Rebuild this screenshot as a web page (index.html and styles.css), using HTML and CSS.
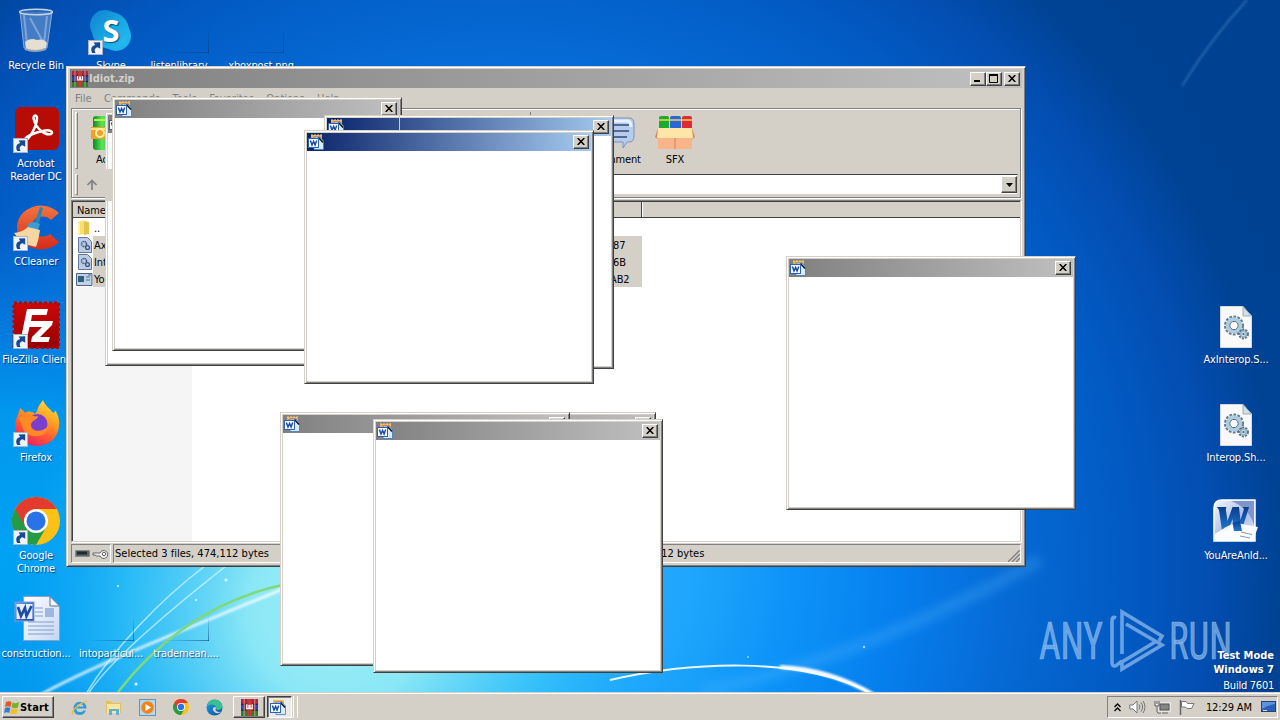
FILE: index.html
```html
<!DOCTYPE html>
<html lang="en">
<head>
<meta charset="utf-8">
<title>Desktop</title>
<link rel="stylesheet" href="styles.css">
</head>
<body>
<svg class="defs" width="0" height="0">
  <defs>
    <linearGradient id="pg" x1="0" y1="0" x2="1" y2="1"><stop offset="0" stop-color="#fff"/><stop offset="1" stop-color="#c4d6f3"/></linearGradient>
    <linearGradient id="wd" x1="0" y1="0" x2="1" y2="1"><stop offset="0" stop-color="#f4f8ff"/><stop offset=".55" stop-color="#a9bbe4"/><stop offset="1" stop-color="#e8effa"/></linearGradient>
    <linearGradient id="wl" x1="0" y1="0" x2="0" y2="1"><stop offset="0" stop-color="#0b3c8c"/><stop offset="1" stop-color="#1f7ad2"/></linearGradient>
    <linearGradient id="wb" x1="0" y1="0" x2="1" y2="1"><stop offset="0" stop-color="#6f9be6"/><stop offset="1" stop-color="#1b3f96"/></linearGradient>
    <linearGradient id="ff" x1="0.8" y1="0" x2="0.3" y2="1"><stop offset="0" stop-color="#ffe23c"/><stop offset=".4" stop-color="#ff9a1f"/><stop offset=".75" stop-color="#ff4a3c"/><stop offset="1" stop-color="#e0206c"/></linearGradient>
    <linearGradient id="fz" x1="0" y1="0" x2="0" y2="1"><stop offset="0" stop-color="#cf0808"/><stop offset="1" stop-color="#960000"/></linearGradient>
    <linearGradient id="cc" x1="0" y1="0" x2="0" y2="1"><stop offset="0" stop-color="#f2743f"/><stop offset="1" stop-color="#d52a1a"/></linearGradient>
    <linearGradient id="sk" x1="0" y1="0" x2="1" y2="1"><stop offset="0" stop-color="#1683cf"/><stop offset=".5" stop-color="#16a7e4"/><stop offset="1" stop-color="#2bc0f2"/></linearGradient>
    <linearGradient id="ed" x1="0" y1="0" x2="1" y2="1"><stop offset="0" stop-color="#1ba0e8"/><stop offset="1" stop-color="#0c4d9c"/></linearGradient>
    <linearGradient id="gn" x1="0" y1="0" x2="1" y2="0"><stop offset="0" stop-color="#0c8a20"/><stop offset=".35" stop-color="#5ae65a"/><stop offset="1" stop-color="#078a1e"/></linearGradient>
    <symbol id="shortcut" viewBox="0 0 15 15"><rect x=".5" y=".5" width="14" height="14" fill="#f0f4fa" stroke="#a8b4c4"/><path d="M4.2 13C2.2 9 3.5 6 7.2 5.1L5.6 2.4 12.2 2.2V8.8L9.6 7.2C6.8 8 6 10 7.6 13Z" fill="#174a92"/></symbol>
    <symbol id="docapp" viewBox="0 0 16 16"><path d="M3 1h11v4H3z" fill="#f3a64a"/><path d="M3 1h11" stroke="#fbd58a" stroke-dasharray="2 1"/><path d="M6 3h6l3.500 4v8.500H6z" fill="#dcebfb" stroke="#3d78ba" stroke-width=".8"/><path d="M10.500 3.500 15 8.500" stroke="#111" stroke-width="1.400"/><rect x=".5" y="4.500" width="10" height="9" fill="#fff" stroke="#2d62b0"/><path d="M2.400 6.500 4 11 5.600 7.400 7.100 11 8.700 6.500" fill="none" stroke="#174ca6" stroke-width="1.500"/></symbol>
    <symbol id="rar" viewBox="0 0 16 16"><rect width="16" height="5" fill="#a5264a"/><rect y="5" width="16" height="5.500" fill="#2844b4"/><rect y="10.500" width="16" height="5.500" fill="#1f8535"/><path d="M0 5h16M0 10.500h16" stroke="#131c3c"/><path d="M3 0v16M13 0v16" stroke="#e88a70" stroke-width="1"/><rect x="6" y="0" width="4" height="16" fill="#c83a2e"/><rect x="4.500" y="5" width="7" height="6" fill="#b3322a"/><path d="M5.500 5v4h2V5.500M8.500 5.500V9h2V5" fill="none" stroke="#fff" stroke-width="1.200"/></symbol>
    <symbol id="dll" viewBox="0 0 32 42"><path d="M.5.500H23L31.500 10V41.500H.5Z" fill="#f9f9f9" stroke="#d4d8dc"/><path d="M23 .5V10h8.500Z" fill="#d3dfe6" stroke="#8ea0ac" stroke-width=".8"/><circle cx="14" cy="19.500" r="7.800" fill="none" stroke="#61798c" stroke-width="4.400" stroke-dasharray="2.400 1.200"/><circle cx="14" cy="19.500" r="6.500" fill="none" stroke="#aacde3" stroke-width="3.600"/><circle cx="14" cy="19.500" r="4.200" fill="none" stroke="#4c5f6e" stroke-width="1"/><circle cx="23.500" cy="28" r="3.900" fill="none" stroke="#586d7e" stroke-width="3" stroke-dasharray="1.800 1"/><circle cx="23.500" cy="28" r="2.900" fill="#d7eaf4" stroke="#8fb3c9" stroke-width="1.600"/><circle cx="23.500" cy="28" r="1.100" fill="#465664"/></symbol>
    <symbol id="chrome" viewBox="0 0 48 48"><circle cx="24" cy="24" r="24" fill="#fbc116"/><path d="M24 24 3.200 12A24 24 0 0 0 24 48L34.400 30Z" fill="#269b46"/><path d="M3.200 12 13.600 30 24 24V12H44.800A24 24 0 0 0 3.200 12Z" fill="#e33b2e"/><circle cx="24" cy="24" r="12" fill="#fff"/><circle cx="24" cy="24" r="9.500" fill="#2a72e8"/></symbol>
    <symbol id="xbtn" viewBox="0 0 8 7"><path d="M.7 0 7.300 7M7.300 0 .7 7" stroke="#000" stroke-width="1.500"/></symbol>
    <symbol id="smalldll" viewBox="0 0 14 16"><path d="M.5.500h9l4 4v11H.5z" fill="#bccbe6" stroke="#62779c"/><circle cx="6" cy="7" r="2.500" fill="none" stroke="#3c5276" stroke-width="1.500" stroke-dasharray="1.300 .7"/><circle cx="9.500" cy="10.500" r="1.900" fill="none" stroke="#3c5276" stroke-width="1.300"/></symbol>
  </defs>
</svg>

<div class="desktop">
  <svg class="wallpaper" width="1280" height="720" viewBox="0 0 1280 720">
    <defs>
      <radialGradient id="w0" gradientUnits="userSpaceOnUse" cx="500" cy="560" r="830"><stop offset="0" stop-color="#35baff"/><stop offset=".24" stop-color="#1da5fc"/><stop offset=".36" stop-color="#0c92f8"/><stop offset=".48" stop-color="#067fee"/><stop offset=".62" stop-color="#0669d4"/><stop offset=".75" stop-color="#025bc4"/><stop offset=".86" stop-color="#034db0"/><stop offset=".94" stop-color="#004394"/><stop offset="1" stop-color="#004292"/></radialGradient>
      <radialGradient id="w1" gradientUnits="userSpaceOnUse" cx="340" cy="610" r="330"><stop offset="0" stop-color="#a4eff6"/><stop offset=".28" stop-color="#8ae7f6"/><stop offset=".65" stop-color="#36c5f8" stop-opacity=".75"/><stop offset="1" stop-color="#12a8fb" stop-opacity="0"/></radialGradient>
      <radialGradient id="w2" gradientUnits="userSpaceOnUse" cx="0" cy="560" r="330"><stop offset="0" stop-color="#00a2f4"/><stop offset=".45" stop-color="#009ff2" stop-opacity=".85"/><stop offset="1" stop-color="#0084e8" stop-opacity="0"/></radialGradient>
      <filter id="b1"><feGaussianBlur stdDeviation="1.200"/></filter>
      <filter id="b2" x="-20%" y="-50%" width="140%" height="200%"><feGaussianBlur stdDeviation="5"/></filter>
    </defs>
    <rect width="1280" height="720" fill="url(#w0)"/>
    <rect width="1280" height="720" fill="url(#w2)"/>
    <rect width="1280" height="720" fill="url(#w1)"/>
    <g fill="none">
      <path d="M700 692Q860 660 1040 560" stroke="#5ac0ff" stroke-opacity=".25" stroke-width="12" filter="url(#b2)"/>
      <path d="M1247 0Q1210 40 1182 86" stroke="#6fa8e0" stroke-opacity=".35" stroke-width="2" filter="url(#b1)"/>
      <path d="M40 695C100 662 190 628 290 586" stroke="#fff" stroke-opacity=".75" stroke-width="3" filter="url(#b1)"/>
      <path d="M88 694C110 660 170 610 226 566M86 694C112 650 160 600 205 566" stroke="#e8fdff" stroke-opacity=".65" stroke-width="1.500"/>
      <path d="M118 692C160 638 215 600 282 585" stroke="#7fd97a" stroke-width="2.500"/>
      <path d="M610 680C690 662 800 655 872 694" stroke="#fff" stroke-opacity=".9" stroke-width="2"/>
      <path d="M780 667Q830 669 874 695" stroke="#fff" stroke-width="4" filter="url(#b1)"/>
    </g>
    <g fill="#e2fbff"><circle cx="226" cy="580" r="1.500"/><circle cx="136" cy="684" r="1.500"/><circle cx="118" cy="586" r="1"/><circle cx="196" cy="600" r="1"/><circle cx="748" cy="657" r="1" opacity=".6"/><circle cx="864" cy="647" r="1.200" opacity=".7"/></g>
    <g class="brand" fill="none" stroke="#a9cff5" stroke-opacity=".62">
      <text x="1039" y="659" font-size="52" textLength="64" lengthAdjust="spacingAndGlyphs">ANY</text>
      <text x="1169" y="659" font-size="52" textLength="63" lengthAdjust="spacingAndGlyphs">RUN</text>
      <path d="M1116 618C1112 616 1112 619 1112 622V662C1112 667 1115 667 1118 664L1122 661M1122 654V612L1162 636 1159 641M1126 624 1162 645 1122 669V662L1155 642" stroke-width="3.600"/>
    </g>
  </svg>

  <div class="item i1"><svg width="38" height="46" viewBox="0 0 38 46"><path d="M3 4 7 40Q18 46 30 40L35 4Z" fill="#7aa2d6" fill-opacity=".55"/><path d="M7 7 10 36M30 8 27 35M13 10 25 32" stroke="#e7f3ff" stroke-width="2" opacity=".35"/><path d="M8 34Q13 29 20 32 27 30 30 35L29 40Q18 45 9 41Z" fill="#e5ded2"/><path d="M3 4 7 40Q18 46 30 40L35 4" fill="none" stroke="#a5bbd8" stroke-opacity=".8"/><path d="M8 41Q18 45 29 41" stroke="#98a4b0" stroke-width="2" fill="none"/><ellipse cx="19" cy="4" rx="16.500" ry="2.800" fill="#4178bd" fill-opacity=".6" stroke="#c6d4e4" stroke-width="1.400"/></svg><span>Recycle Bin</span></div>
  <div class="item i2"><svg width="48" height="48" viewBox="0 0 48 48"><circle cx="18" cy="18" r="15" fill="#118fd6"/><circle cx="29" cy="29" r="15" fill="#20b4ee"/><circle cx="23.500" cy="23.500" r="18.500" fill="url(#sk)"/><text x="24" y="35" class="skype-s">S</text></svg><svg class="arrow" width="15" height="15"><use href="#shortcut"/></svg><span>Skype</span></div>
  <div class="item i3"><i class="ghost"></i><span>listenlibrary</span></div>
  <div class="item i4"><i class="ghost"></i><span>xboxpost.png</span></div>
  <div class="item i5"><svg width="48" height="48" viewBox="0 0 48 48"><rect x="3" y="2" width="44" height="43" rx="6" fill="#b70c03"/><path d="M13 36C19 32 25 20 25 13 25 9 20 10 22 15 24 23 33 31 39 29 42 27 38 24 31 26 24 27 15 31 13 34" fill="none" stroke="#fff" stroke-width="2.500"/></svg><svg class="arrow" width="15" height="15"><use href="#shortcut"/></svg><span>Acrobat<br>Reader DC</span></div>
  <div class="item i6"><svg width="48" height="48" viewBox="0 0 48 48"><path d="M47 10A24 22 0 1 0 47 39L38 31A11 10 0 1 1 39 17Z" fill="url(#cc)"/><path d="M28 4 31 5 27 20 23 19Z" fill="#2b86b8"/><path d="M16 21Q22 17 28 21L26 27 15 25Z" fill="#3d9cd0"/><path d="M16 24 28 27Q27 36 24 44 10 42 2 30 11 29 16 24Z" fill="#f6d7a4"/></svg><svg class="arrow" width="15" height="15"><use href="#shortcut"/></svg><span>CCleaner</span></div>
  <div class="item i7"><svg width="48" height="48" viewBox="0 0 48 48"><rect x="2" y="2" width="45" height="45" fill="url(#fz)" stroke="#b40808" stroke-width="3" stroke-dasharray="3 2"/><path d="M15 8H36L34.500 14H20L19 20H41L40 24 28 36H38L36.500 41H19L20 36 30 26H17.500L15 37H9Z" fill="#fff"/></svg><svg class="arrow" width="15" height="15"><use href="#shortcut"/></svg><span>FileZilla Client</span></div>
  <div class="item i8"><svg width="48" height="48" viewBox="0 0 48 48"><path d="M3 27C3 20 7 15 8 9 10 10 12 12 13 14 16 12 20 12 23 15L25 12C26 7 29 4 31 1 33 7 38 9 41 14 43 13 43 12 43 11 48 18 48 26 46 32 43 42 34 47 24 47 12 46 3 38 3 27Z" fill="url(#ff)"/><circle cx="25.500" cy="25" r="10" fill="#7a3fd0"/><path d="M7 19C15 14 21 18 26 17 26 21 19 21 19 26 19 33 31 34 36 27 36 38 20 41 12 32Z" fill="#ff8a25"/></svg><svg class="arrow" width="15" height="15"><use href="#shortcut"/></svg><span>Firefox</span></div>
  <div class="item i9"><svg width="48" height="48"><use href="#chrome"/></svg><svg class="arrow" width="15" height="15"><use href="#shortcut"/></svg><span>Google<br>Chrome</span></div>
  <div class="item i10"><svg width="48" height="48" viewBox="0 0 48 48"><path d="M11.500 1.500H38L47.500 11V45.500H11.500Z" fill="url(#pg)" stroke="#8b9fc8"/><path d="M38 1.500V11H47.500Z" fill="#f2f6fd" stroke="#5c6f9b"/><path d="M23 13H31M23 17H31M23 21H31M16 27H42M16 31H42M16 35H42M16 39H42" stroke="#7f9dcd"/><rect x="33" y="13" width="9" height="9" fill="#9fb7dd"/><rect x="3" y="7" width="19" height="19" fill="url(#wb)" stroke="#7d9fdc"/><rect x="4.500" y="9" width="16" height="15" fill="#e7effb"/><path d="M6 12 9 21 13 13 14.500 21 19.500 11" fill="none" stroke="#1f4ca4" stroke-width="2.700"/></svg><span>construction...</span></div>
  <div class="item i11"><i class="ghost"></i><span>intoparticul...</span></div>
  <div class="item i12"><i class="ghost"></i><span>trademean....</span></div>
  <div class="item i13"><svg width="32" height="42"><use href="#dll"/></svg><span>AxInterop.S...</span></div>
  <div class="item i14"><svg width="32" height="42"><use href="#dll"/></svg><span>Interop.Sh...</span></div>
  <div class="item i15"><svg width="46" height="44" viewBox="0 0 46 44"><path d="M9 1H42V42H1V9Q1 1 9 1Z" fill="url(#wd)" stroke="#fff" stroke-width="1.500"/><path d="M18 2H41V26Q36 9 18 2Z" fill="#7e95cc"/><path d="M3 8H13L15 23 20 8H27L29 23 32 8H40" fill="none"/><path d="M4 8H13.500L12.800 10 14.500 22 19.500 8H26L27.500 21 31 10 29.500 8H36L28.500 32H21L19.500 20 15 32H9L6 11Z" fill="url(#wl)"/><path d="M2 35Q18 24 24 24L45 28 40 42H2Z" fill="#fff" fill-opacity=".95"/><path d="M27 22 29 32H21L19.500 24Z" fill="url(#wl)"/><path d="M28 33 39 35.500M27 37 37 39" stroke="#8795ad"/></svg><span>YouAreAnId...</span></div>

  <section class="archiver">
    <header class="caption gray"><svg width="16" height="16"><use href="#rar"/></svg><b>Idiot.zip</b><span class="fill"></span><i class="btn"><svg width="8" height="7"><path d="M0 5h6v2H0z"/></svg></i><i class="btn max"><svg width="9" height="9"><path d="M.5 1h8v7.500h-8z" fill="none" stroke="#000"/><path d="M0 0h9v2H0z"/></svg></i><i class="btn"><svg width="8" height="7"><use href="#xbtn"/></svg></i></header>
    <nav class="menu"><span>File</span><span>Commands</span><span>Tools</span><span>Favorites</span><span>Options</span><span>Help</span></nav>
    <div class="rebar">
      <div class="tools">
        <i class="grip"></i>
        <div class="tool first"><svg width="34" height="36" viewBox="0 0 34 36"><rect x="4" y="1" width="26" height="34" rx="3" fill="url(#gn)"/><path d="M5 5H29" stroke="#b9f04a" stroke-width="2"/><path d="M2 12H32V24H2Z" fill="#f0a02a"/><path d="M2 14h30" stroke="#ffdf7a" stroke-width="2"/><circle cx="11" cy="18" r="4" fill="none" stroke="#fff2a4" stroke-width="2"/></svg><span>Add</span></div>
        <span class="fill"></span><i class="sep"></i><span class="gap"></span>
        <div class="tool"><svg width="38" height="36" viewBox="0 0 38 36"><path d="M4 3H31Q36 3 36 9V21Q36 27 31 27H29L25 33V27H4Z" fill="#b7cbed" stroke="#7893bb"/><path d="M6 6H30Q33 7 33 12" stroke="#e8f3ff" stroke-width="3" fill="none"/><path d="M7 10H31M7 16H31M7 22H29" stroke="#324b72" stroke-width="1.500"/></svg><span>Comment</span></div>
        <div class="tool"><svg width="40" height="36" viewBox="0 0 40 36"><rect x="4" y="1" width="10" height="14" rx="2" fill="#1eaa2f"/><rect x="15" y="1" width="11" height="14" rx="2" fill="#2b67da"/><rect x="27" y="1" width="10" height="14" rx="2" fill="#de2b35"/><path d="M4 5H37" stroke="#edd64a" stroke-width="1.500"/><path d="M3 13 0 22 3 24V34H37V24L40 22 37 13Z" fill="#d98560"/><path d="M3 13H37L38 23H2Z" fill="#fde6a8"/><path d="M3 23H37V34H3Z" fill="#f9b489"/><path d="M20 23V34" stroke="#d88351"/></svg><span>SFX</span></div>
      </div>
      <div class="address"><i class="grip"></i><svg width="12" height="12" viewBox="0 0 12 12"><path d="M6 11V1.500M1.500 6 6 1.500 10.500 6" fill="none" stroke="#808080" stroke-width="1.700"/></svg><div class="field"><i class="drop"><svg width="7" height="4"><path d="M0 0H7L3.500 4Z"/></svg></i></div></div>
    </div>
    <div class="list">
      <div class="thead"><span class="c-name">Name</span><span class="c-crc"></span><span></span></div>
      <div class="row"><svg width="17" height="16" viewBox="0 0 17 16"><path d="M2 2 8 0V14L2 15Z" fill="#f7df71"/><path d="M8 1 13 2V14L8 15Z" fill="#e4c34a"/><path d="M3 3V14" stroke="#fff5ad" stroke-width="2"/></svg><span class="nm">..</span></div>
      <div class="row sel"><svg width="17" height="16"><use href="#smalldll" width="14" height="16" x="2"/></svg><span class="nm">AxInterop.S...</span><span class="crc">87</span></div>
      <div class="row sel"><svg width="17" height="16"><use href="#smalldll" width="14" height="16" x="2"/></svg><span class="nm">Interop.Sh...</span><span class="crc">6B</span></div>
      <div class="row sel"><svg width="17" height="16" viewBox="0 0 17 16"><path d="M.5 2.500h15.500v12H.5z" fill="#bdd2e8" stroke="#51647d"/><path d="M2 5h6v6H2z" fill="#315f78"/><path d="M10 6h4M10 9h4M12 4h3" stroke="#50718f"/></svg><span class="nm">YouAreAnId...</span><span class="crc wide">AB2</span></div>
      <div class="colshade"></div>
    </div>
    <footer class="status"><div class="cell icons"><svg width="15" height="8"><path d="M.5.500h14v6H.5z" fill="#5c6466" stroke="#858b8c"/><path d="M2 3h10" stroke="#23292b" stroke-width="3"/></svg><svg width="17" height="10" viewBox="0 0 17 10"><path d="M1 4H8A4 4 0 1 1 8 7H4L3 6H1Z" fill="#eee" stroke="#686868"/><circle cx="12" cy="5" r="1.700" fill="#fff" stroke="#686868"/></svg></div><div class="cell">Selected 3 files, 474,112 bytes</div><div class="cell total"><span>Total 3 files, 474,112 bytes</span><svg width="12" height="12"><path d="M0 12 12 0M4 12 12 4M8 12 12 8" stroke="#808080" stroke-width="1.400"/></svg></div></footer>
  </section>

  <section class="popup p-b"><header class="caption gray"><svg width="16" height="16"><use href="#docapp"/></svg></header></section>
  <i class="unpainted"></i>
  <section class="popup p-a"><header class="caption gray"><svg width="16" height="16"><use href="#docapp"/></svg><span class="fill"></span><i class="btn"><svg width="8" height="7"><use href="#xbtn"/></svg></i></header></section>
  <section class="popup p-c"><header class="caption navy"><svg width="16" height="16"><use href="#docapp"/></svg><span class="fill"></span><i class="btn"><svg width="8" height="7"><use href="#xbtn"/></svg></i></header></section>
  <i class="trail"></i>
  <section class="popup p-d"><header class="caption navy"><svg width="16" height="16"><use href="#docapp"/></svg><span class="fill"></span><i class="btn"><svg width="8" height="7"><use href="#xbtn"/></svg></i></header></section>
  <section class="popup p-f"><header class="caption gray"><span class="fill"></span><i class="btn"></i></header></section>
  <section class="popup p-e"><header class="caption gray"><svg width="16" height="16"><use href="#docapp"/></svg><span class="fill"></span><i class="btn"></i></header></section>
  <section class="popup p-g"><header class="caption gray"><svg width="16" height="16"><use href="#docapp"/></svg><span class="fill"></span><i class="btn"><svg width="8" height="7"><use href="#xbtn"/></svg></i></header></section>
  <section class="popup p-h"><header class="caption gray"><svg width="16" height="16"><use href="#docapp"/></svg><span class="fill"></span><i class="btn"><svg width="8" height="7"><use href="#xbtn"/></svg></i></header></section>

  <div class="build"><b>Test Mode</b><b>Windows 7</b><span>Build 7601</span></div>
</div>

<div class="taskbar">
  <div class="start"><svg width="16" height="15" viewBox="0 0 16 15"><path d="M2 2Q5 .5 7.500 2L6.500 7Q4 5.500 1 7Z" fill="#e8542a"/><path d="M8.500 2.500Q12 4 15 2L14 7.500Q11 9 7.500 7.500Z" fill="#72b52c"/><path d="M1 8Q4 6.500 6.300 8L5.300 13Q3 11.500 0 13Z" fill="#2f7fd8"/><path d="M7.300 8.500Q10.500 10 13.700 8.500L12.500 13.500Q9.500 15 6.200 13.500Z" fill="#f5bd22"/></svg><b>Start</b></div>
  <div class="quick">
    <svg width="17" height="17" viewBox="0 0 17 17"><path d="M15.500 9.500H5.300Q5.500 13 9 13 11.500 13 12.500 11.500H15Q13 16 8.700 16 2.500 15.500 2.500 9.500 3 3 8.800 2.800 15.500 3 15.500 9.500ZM5.400 7.500H12.500Q12 5 8.900 5 6 5 5.400 7.500Z" fill="#2f9bdc"/><path d="M2 15.500Q-1 13 8 6 15 1 16 3" fill="none" stroke="#ecc13a" stroke-width="1.300"/></svg>
    <svg width="17" height="17" viewBox="0 0 17 17"><path d="M1 2H6L7 4H16V14H1Z" fill="#e6bf58"/><path d="M2 5H15V14H2Z" fill="#f8e7a0"/><path d="M4 16V10H14V16H11V12H7V16Z" fill="#62aede"/></svg>
    <svg width="17" height="17" viewBox="0 0 17 17"><rect x=".5" y=".5" width="16" height="16" fill="#b3d7ed" stroke="#6494b8"/><circle cx="8.500" cy="8.500" r="6.200" fill="#f18416"/><path d="M6.500 5 12 8.500 6.500 12Z" fill="#fff"/></svg>
    <svg width="16" height="16"><use href="#chrome"/></svg>
    <svg width="17" height="17" viewBox="0 0 17 17"><circle cx="8.500" cy="8.500" r="8" fill="url(#ed)"/><path d="M1 7Q3 1 9 .8 15 1 16.500 7 16.500 10.500 12.500 11 10 11 10.300 9 10 6 6 5.500 3 5.500 1 7Z" fill="#38bf92"/><path d="M10.300 9Q9 7 7 9 6 12 10 14 13 15 15.500 12 14 13.500 11 12.500 8.500 11 10.300 9Z" fill="#d4d0c8"/></svg>
  </div>
  <div class="task"><svg width="17" height="17"><use href="#rar"/></svg></div>
  <div class="task down"><svg width="16" height="16"><use href="#docapp"/></svg></div>
  <i class="edge"></i><i class="edge last"></i>
  <span class="fill"></span>
  <div class="tray"><svg width="7" height="9" viewBox="0 0 7 9"><path d="M.5 4 3.500 1 6.500 4M.5 8 3.500 5 6.500 8" fill="none" stroke="#000" stroke-width="1.300"/></svg><svg width="17" height="14" viewBox="0 0 17 14"><path d="M.8 5H4L8 1V13L4 9H.8Z" fill="#fff" stroke="#777"/><path d="M10 4.500Q12 7 10 9.500M12 2.500Q15.200 7 12 11.500M14 1Q18 7 14 13" fill="none" stroke="#777"/></svg><svg width="17" height="15" viewBox="0 0 17 15"><rect x="5" y="3" width="11" height="8" fill="#b8b8b8" stroke="#fff"/><rect x="6" y="4" width="9" height="6" fill="#858585" stroke="#555"/><path d="M8 13h6M3 7v5q0 2 4 1" stroke="#666" fill="none"/><path d="M1 1V6H5V1M3 1V4" stroke="#555" fill="#eee"/></svg><svg width="16" height="15" viewBox="0 0 16 15"><path d="M1.500 0V15" stroke="#666" stroke-width="1.500"/><path d="M2.500 1.500H7L8.500 3.500H15L12.500 8.500H8L6.500 7H2.500Z" fill="#fff" stroke="#777"/></svg><span>12:29 AM</span><svg width="15" height="12" viewBox="0 0 15 12"><rect x=".5" y=".5" width="14" height="10" fill="#2862b8" stroke="#234272"/><path d="M1 1H14V3Q7 4 1 8Z" fill="#5e94df"/><path d="M2 9.500h4" stroke="#dde"/></svg></div>
</div>
</body>
</html>
```
FILE: styles.css
```css
* { box-sizing: border-box; }
body {
  margin: 0;
  width: 1280px;
  height: 720px;
  overflow: hidden;
  font: 11px/13px "DejaVu Sans Condensed", "DejaVu Sans", sans-serif;
  font-stretch: condensed;
  letter-spacing: -0.12px;
  color: #000;
  display: flex;
  flex-direction: column;
}
svg { display: block; flex: none; }
.defs { position: absolute; }
.fill { flex: 1; }
.desktop { position: relative; height: 692px; overflow: hidden; flex: none; }
.wallpaper { position: absolute; left: 0; top: 0; }
.brand text { font-family: Roboto, sans-serif; fill: #a9cff5; fill-opacity: .62; stroke: #a9cff5; stroke-width: .7px; letter-spacing: 0; }

/* desktop icons */
.item {
  position: absolute;
  width: 76px;
  height: 75px;
  display: flex;
  flex-direction: column;
  align-items: center;
  justify-content: flex-start;
  color: #fff;
  text-align: center;
  text-shadow: 1px 1px 1px rgba(0, 30, 80, .7);
  white-space: nowrap;
}
.item > svg:first-child { height: 48px; margin-bottom: 4px; }
.item .arrow { position: absolute; left: 15px; top: 33px; }
.ghost {
  width: 45px;
  height: 46px;
  margin: 0 0 6px;
  background:
    linear-gradient(rgba(10, 60, 120, 0), rgba(10, 60, 120, .6)) right bottom / 1px 24px no-repeat,
    linear-gradient(90deg, rgba(10, 60, 120, 0), rgba(10, 60, 120, .6)) right bottom / 45px 1px no-repeat;
}
.skype-s { font: bold 31px "Open Sans", sans-serif; fill: #fff; text-anchor: middle; letter-spacing: 0; }
.i1 { left: -2px; top: 7px; }
.i2 { left: 73px; top: 7px; }
.i3 { left: 141px; top: 7px; }
.i3 .ghost { margin-left: 15px; }
.i4 { left: 223px; top: 7px; }
.i5 { left: -2px; top: 105px; }
.i6 { left: -2px; top: 203px; }
.i7 { left: -2px; top: 301px; }
.i8 { left: -2px; top: 399px; }
.i9 { left: -2px; top: 497px; }
.i10 { left: -2px; top: 595px; }
.i11 { left: 73px; top: 595px; }
.i12 { left: 148px; top: 595px; }
.i13 { left: 1198px; top: 301px; }
.i14 { left: 1198px; top: 399px; }
.i15 { left: 1198px; top: 497px; }
.i13 svg, .i14 svg { position: relative; top: 2px; }

/* window chrome */
.caption { height: 18px; display: flex; align-items: center; padding: 0 2px; color: #d4d0c8; }
.gray { background: linear-gradient(90deg, #808080, #c0c0c0); }
.navy { background: linear-gradient(90deg, #0a246a, #a6caf0); }
.caption b { font: bold 11px/13px "DejaVu Sans Condensed", sans-serif; font-stretch: condensed; padding-left: 1px; letter-spacing: 0; }
.btn {
  width: 16px;
  height: 14px;
  display: flex;
  align-items: center;
  justify-content: center;
  background: #d4d0c8;
  border: 1px solid;
  border-color: #fff #404040 #404040 #fff;
  box-shadow: inset -1px -1px #808080;
}
.btn svg { margin: 0 1px 1px 0; }
.btn.max { margin-right: 2px; }
.popup {
  position: absolute;
  width: 290px;
  height: 254px;
  padding: 1px;
  background: #fff;
  border: 1px solid;
  border-color: #d4d0c8 #404040 #404040 #d4d0c8;
  box-shadow: inset 1px 1px #fff, inset -1px -1px #808080, inset 2px 2px #d4d0c8, inset -2px -2px #d4d0c8;
}
.popup .caption { margin: 1px; padding-left: 1px; }
.p-a { left: 112px; top: 97px; }
.p-b { left: 105px; top: 112px; }
.p-c { left: 324px; top: 115px; }
.p-d { left: 304px; top: 130px; }
.p-e { left: 280px; top: 412px; }
.p-f { left: 366px; top: 412px; }
.p-g { left: 373px; top: 419px; }
.p-h { left: 786px; top: 256px; }
.unpainted { position: absolute; left: 105px; top: 169px; width: 8px; height: 32px; background: #d4d0c8; }
.trail { position: absolute; left: 399px; top: 116px; width: 1px; height: 15px; background: #d4d0c8; }

/* archive window */
.archiver {
  position: absolute;
  left: 66px;
  top: 66px;
  width: 960px;
  height: 501px;
  padding: 2px 3px 3px;
  display: flex;
  flex-direction: column;
  background: #d4d0c8;
  border: 1px solid;
  border-color: #d4d0c8 #404040 #404040 #d4d0c8;
  box-shadow: inset 1px 1px #fff, inset -1px -1px #808080;
}
.archiver > .caption { height: 19px; padding-right: 2px; }
.menu { height: 20px; padding: 4px 5px 0; display: flex; gap: 12.5px; color: #808080; letter-spacing: 0; }
.rebar { height: 90px; margin: 0 1px; border: 1px solid #808080; box-shadow: inset 1px 1px #fff, 1px 1px #fff; display: flex; flex-direction: column; }
.tools { height: 63px; padding: 3px 0 0 3px; display: flex; }
.grip { width: 3px; height: 57px; border: 1px solid; border-color: #fff #808080 #808080 #fff; }
.tool { width: 58px; display: flex; flex-direction: column; align-items: center; gap: 2px; padding-top: 3px; }
.tool.first { width: 55px; }
.sep { width: 2px; height: 56px; border-left: 1px solid #808080; }
.gap { width: 56px; }
.tools .tool:last-child { margin-right: 316px; }
.address { height: 25px; padding: 2px 2px 2px 3px; display: flex; align-items: center; }
.address .grip { height: 21px; margin-right: 8px; }
.field { flex: 1; height: 21px; margin-left: 40px; padding: 1px 0; background: #fff; border: 1px solid; border-color: #404040 #d4d0c8 #d4d0c8 #404040; display: flex; justify-content: flex-end; }
.drop { width: 16px; height: 17px; display: flex; align-items: center; justify-content: center; background: #d4d0c8; border: 1px solid; border-color: #fff #404040 #404040 #fff; box-shadow: inset -1px -1px #808080; }
.list { height: 342px; margin: 2px 1px 0; background: #fff; border: 1px solid; border-color: #808080 #d4d0c8 #d4d0c8 #808080; box-shadow: inset 1px 1px #404040, 1px 1px #fff; padding: 1px 0 0 1px; display: flex; flex-direction: column; }
.thead { height: 16px; flex: none; display: flex; background: #d4d0c8; border-bottom: 1px solid #404040; margin-bottom: 1px; }
.thead span { padding: 2px 4px 0; }
.c-name { width: 119px; }
.c-crc { width: 450px; border-right: 1px solid #404040; box-shadow: 1px 0 #fff; }
.row { height: 17px; flex: none; width: 569px; display: flex; align-items: center; padding-left: 3px; }
.nm { flex: 1; height: 17px; padding: 3px 1px 0; }
.sel .nm, .sel .crc { background: #d4d0c8; }
.crc { width: 29px; height: 17px; padding-top: 3px; }
.crc.wide { width: 32px; }
.colshade { width: 119px; flex: 1; background: #f5f5f5; }
.status { margin: 2px 1px 0; height: 19px; display: flex; gap: 2px; letter-spacing: .02px; }
.cell { flex: 1; padding: 2px 1px 0; border: 1px solid; border-color: #808080 #fff #fff #808080; display: flex; justify-content: space-between; }
.cell.icons { flex: none; width: 40px; align-items: center; padding: 0 1px 0 3px; }
.cell.total { padding-left: 2px; }
.cell.total svg { margin: 3px -1px 0 0; }

.build { position: absolute; right: 6px; bottom: -3px; display: flex; flex-direction: column; align-items: flex-end; color: #fff; text-shadow: 1px 1px 1px #003070; line-height: 14px; }
.build b { letter-spacing: 0; }
.build span { line-height: 18px; letter-spacing: -.25px; }

/* taskbar */
.taskbar { height: 28px; flex: none; padding: 3px 2px 2px; display: flex; background: #d4d0c8; border-top: 1px solid #d4d0c8; box-shadow: inset 0 1px #fff; }
.start, .task { display: flex; align-items: center; border: 1px solid; border-color: #fff #404040 #404040 #fff; box-shadow: inset -1px -1px #808080; }
.start { width: 52px; padding-left: 1px; gap: 0; }
.start b { letter-spacing: .15px; }
.quick { width: 179px; padding-left: 17px; display: flex; align-items: center; gap: 17px; }
.task { width: 32px; justify-content: center; margin-right: 2px; }
.task.down { width: 25px; padding-right: 3px; border-color: #404040 #fff #fff #404040; box-shadow: inset 1px 1px #808080; background: #eceae6; margin: 0; }
.edge { width: 2px; border-right: 1px solid #fff; }
.edge.last { width: 4px; }
.tray { width: 171px; padding: 0 1px 0 6px; display: flex; align-items: center; justify-content: space-between; border: 1px solid; border-color: #808080 #fff #fff #808080; }
.tray span { padding: 0 1px 0 3px; }
```
